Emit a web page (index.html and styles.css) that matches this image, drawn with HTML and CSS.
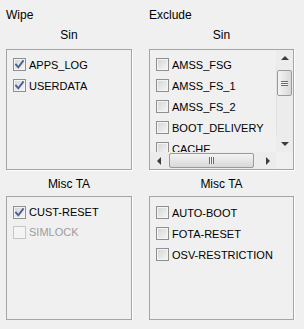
FILE: index.html
```html
<!DOCTYPE html>
<html lang="en">
<head>
  <meta charset="UTF-8">
  <title>Wipe / Exclude</title>
  <link rel="stylesheet" href="styles.css">
</head>
<body>
  <div class="panel">

    <div class="column col-left">
      <div class="title">Wipe</div>
      <div class="sub">Sin</div>
      <div class="box box-sin">
        <div class="list">
          <label class="item"><span class="cb on"><svg viewBox="0 0 11 11"><path d="M2 5.6 L4.3 8.3 L9 2.2"/></svg></span>APPS_LOG</label>
          <label class="item"><span class="cb on"><svg viewBox="0 0 11 11"><path d="M2 5.6 L4.3 8.3 L9 2.2"/></svg></span>USERDATA</label>
        </div>
      </div>
      <div class="sub sub-misc">Misc TA</div>
      <div class="box box-misc">
        <div class="list list-misc">
          <label class="item"><span class="cb on"><svg viewBox="0 0 11 11"><path d="M2 5.6 L4.3 8.3 L9 2.2"/></svg></span>CUST-RESET</label>
          <label class="item disabled"><span class="cb"></span>SIMLOCK</label>
        </div>
      </div>
    </div>

    <div class="column col-right">
      <div class="title">Exclude</div>
      <div class="sub">Sin</div>
      <div class="box box-sin scroller">
        <div class="list view">
          <label class="item"><span class="cb"></span>AMSS_FSG</label>
          <label class="item"><span class="cb"></span>AMSS_FS_1</label>
          <label class="item"><span class="cb"></span>AMSS_FS_2</label>
          <label class="item"><span class="cb"></span>BOOT_DELIVERY</label>
          <label class="item"><span class="cb"></span>CACHE</label>
        </div>
        <div class="vbar">
          <div class="btn"><span class="arr up"></span></div>
          <div class="track vtrack">
            <div class="thumb vthumb"><span class="grip-h"></span></div>
          </div>
          <div class="btn"><span class="arr down"></span></div>
        </div>
        <div class="hbar">
          <div class="btn"><span class="arr left"></span></div>
          <div class="track htrack">
            <div class="thumb hthumb"><span class="grip-v"></span></div>
          </div>
          <div class="btn"><span class="arr right"></span></div>
        </div>
        <div class="corner"></div>
      </div>
      <div class="sub sub-misc">Misc TA</div>
      <div class="box box-misc">
        <div class="list list-misc">
          <label class="item"><span class="cb"></span>AUTO-BOOT</label>
          <label class="item"><span class="cb"></span>FOTA-RESET</label>
          <label class="item"><span class="cb"></span>OSV-RESTRICTION</label>
        </div>
      </div>
    </div>

  </div>
</body>
</html>
```

FILE: styles.css
```css
body { margin: 0; background: #f0f0f0; color: #000; font-family: "Liberation Sans", Arial, sans-serif; }
.panel { display: flex; gap: 17px; padding: 8px 0 0 6px; }
.column { display: flex; flex-direction: column; }
.col-left { width: 126px; }
.col-right { width: 145px; }

.title { font-size: 12px; line-height: 14px; height: 14px; }
.sub { font-size: 12px; line-height: 14px; height: 14px; text-align: center; margin-top: 6px; }
.sub-misc { margin-top: 7px; }

.box { box-sizing: border-box; border: 1px solid #a5a5a5; box-shadow: 1px 1px 0 #fff; background: #f0f0f0; overflow: hidden; }
.box-sin { margin-top: 7px; height: 121px; }
.box-misc { margin-top: 5px; height: 124px; }

.list { padding: 4px 0 0 6px; }
.list-misc { padding-top: 5px; }
.item { display: flex; align-items: center; height: 21px; font-size: 11px; white-space: nowrap; }
.col-left .list-misc .item { height: 20px; }
.item.disabled { color: #9d9d9d; }

.cb { box-sizing: border-box; width: 13px; height: 13px; margin-right: 3px; flex: none;
  border: 1px solid #8e8f8f; background: linear-gradient(135deg, #d4d4d4, #f7f7f7);
  box-shadow: inset 0 0 0 1px #f4f4f4; }
.cb svg { display: block; width: 11px; height: 11px; }
.cb path { fill: none; stroke: #4c5f95; stroke-width: 1.9; stroke-linecap: square; }
.disabled .cb { border-color: #c6c6c6; background: #f4f4f4; box-shadow: none; }

/* listbox with scrollbars */
.scroller { display: grid; grid-template-columns: 1fr 17px; grid-template-rows: 1fr 17px; }
.view { overflow: hidden; min-width: 0; }
.vbar { display: flex; flex-direction: column; background: #ececec; }
.hbar { display: flex; background: #ececec; }
.corner { background: #f0f0f0; }
.btn { flex: none; width: 17px; height: 17px; display: flex; align-items: center; justify-content: center; }
.track { flex: 1; position: relative; }
.vtrack { box-shadow: inset 1px 0 0 #e2e2e2; }
.thumb { box-sizing: border-box; border: 1px solid #9a9a9a; border-radius: 2px;
  background: linear-gradient(90deg, #f3f3f3, #e6e6e6 50%, #d8d8d8);
  display: flex; align-items: center; justify-content: center; }
.vthumb { margin: 3px 1px 0 1px; height: 26px; }
.hthumb { margin: 1px 0 0 2px; width: 85px; height: 15px; background: linear-gradient(180deg, #f3f3f3, #e6e6e6 50%, #d8d8d8); }
.grip-h { width: 7px; height: 5px; background: repeating-linear-gradient(180deg, #6b6b6b 0 1px, #f4f4f4 1px 2px); }
.grip-v { width: 5px; height: 7px; background: repeating-linear-gradient(90deg, #6b6b6b 0 1px, #f4f4f4 1px 2px); }

.arr { width: 0; height: 0; border: 4px solid transparent; }
.arr.up { border-top: 0; border-bottom-color: #3c3c3c; margin-bottom: 1px; }
.arr.down { border-bottom: 0; border-top-color: #3c3c3c; margin-top: 1px; }
.arr.left { border-left: 0; border-right-color: #3c3c3c; }
.arr.right { border-right: 0; border-left-color: #3c3c3c; }
```
